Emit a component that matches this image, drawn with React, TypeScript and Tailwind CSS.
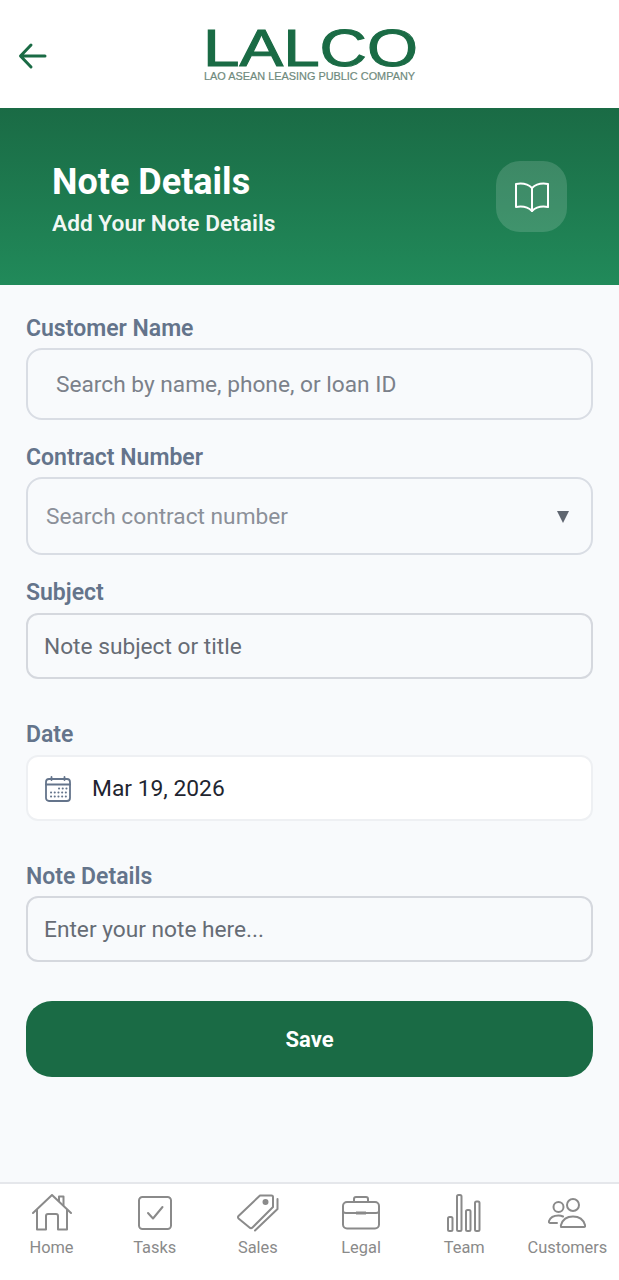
import { FC, ReactNode } from 'react';

const Label: FC<{ text: string; className?: string }> = ({ text, className = '' }) => (
    <div className={ `text-[23px] leading-[26px] font-semibold text-[#64748b] ${ className }` }>{ text }</div>
);

const navStroke = { fill: 'none', stroke: '#8a8a8a', strokeWidth: 2, strokeLinecap: 'round', strokeLinejoin: 'round' } as const;

const HomeIcon = () => (
    <svg width="40" height="38" viewBox="0 0 40 38" { ...navStroke }>
        <path d="M1 19 L20 1 L39 19" />
        <path d="M27 7 V2.5 H31.5 V11" />
        <path d="M5 16 V35.5 H14 V22 Q14 20 16 20 H24 Q26 20 26 22 V35.5 H35 V16" />
    </svg>
);
const TasksIcon = () => (
    <svg width="34" height="34" viewBox="0 0 34 34" { ...navStroke }>
        <rect x="1" y="1" width="32" height="32" rx="3.5" />
        <path d="M10 17 L15 22.5 L24.5 11" />
    </svg>
);
const SalesIcon = () => (
    <svg width="42" height="38" viewBox="0 0 42 38" { ...navStroke }>
        <path d="M1.5 22 L23 1.5 L34.5 1.5 Q36 1.5 36 3 L36 13 L15.5 33.5 Q14 35 12.5 33.5 L1.5 24.5 Q0.5 23 1.5 22 Z" />
        <circle cx="28.5" cy="8" r="2" fill="#8a8a8a" />
        <path d="M40.5 5 V15 L18 36.5" />
    </svg>
);
const LegalIcon = () => (
    <svg width="38" height="34" viewBox="0 0 38 34" { ...navStroke }>
        <rect x="1" y="6" width="36" height="26.5" rx="4" />
        <path d="M12 6 V3 Q12 1 14 1 H24 Q26 1 26 3 V6" />
        <path d="M1 15 Q1 17 4 17 H34 Q37 17 37 15" />
        <rect x="14" y="15.5" width="10" height="3" fill="#8a8a8a" stroke="none" />
    </svg>
);
const TeamIcon = () => (
    <svg width="34" height="38" viewBox="0 0 34 38" { ...navStroke }>
        <rect x="1" y="23" width="4.5" height="14" rx="1.5" />
        <rect x="10" y="1" width="4.5" height="36" rx="1.5" />
        <rect x="19" y="16" width="4.5" height="21" rx="1.5" />
        <rect x="28" y="7.5" width="4.5" height="29.5" rx="1.5" />
    </svg>
);
const CustomersIcon = () => (
    <svg width="38" height="30" viewBox="0 0 38 30" { ...navStroke }>
        <circle cx="10.5" cy="9" r="5" />
        <circle cx="25" cy="7" r="6" />
        <path d="M13 29 H36 Q37.5 29 37 27 Q34.5 18.5 25 18.5 Q15.5 18.5 13 27 Q12.5 29 14 29" />
        <path d="M9 25 H2.5 Q0.5 25 1 23 Q3 17.5 10.5 17.5 Q13 17.5 15 18.5" />
    </svg>
);

const CalendarIcon = () => (
    <svg width="26" height="26" viewBox="0 0 26 26" fill="none" stroke="#64748b" strokeWidth="1.8" strokeLinecap="round">
        <rect x="1" y="3" width="24" height="22" rx="3" />
        <path d="M1 8.5 H25" />
        <path d="M6.5 1 V4 M19.5 1 V4" />
        <path strokeWidth="2" strokeDasharray="0.1 3.6" d="M14 12.5 H22 M6 16.5 H22 M6 20.5 H22" />
    </svg>
);

const NavItem: FC<{ label: string; children: ReactNode }> = ({ label, children }) => (
    <div className="flex flex-col items-center w-[103px]">
        <div className="h-[42px] flex items-center justify-center">{ children }</div>
        <span className="mt-[4px] text-[16.4px] leading-[20px] text-[#8a8a8a] whitespace-nowrap">{ label }</span>
    </div>
);

export default function App()
{
    return (
        <div className="w-[619px] h-[1280px] flex flex-col bg-[#f8fafc] font-['Roboto',sans-serif]">
            <header className="h-[108px] bg-white flex items-center relative shrink-0">
                <svg className="absolute left-[18px] top-[42px]" width="29" height="28" viewBox="0 0 29 28" fill="none" stroke="#1a6b45" strokeWidth="3" strokeLinecap="round" strokeLinejoin="round">
                    <path d="M3 14 H27 M13 3 L2.5 14 L13 25" />
                </svg>
                <div className="ml-[203px] mt-[4px] w-[212px] flex flex-col font-['Liberation_Sans',sans-serif]">
                    <span className="block h-[36px] text-[51px] leading-[36px] text-[#1a6b45] origin-left scale-x-[1.285] whitespace-nowrap [-webkit-text-stroke:1px_#1a6b45]">LALCO</span>
                    <span className="block mt-[4px] ml-[1px] text-[10.9px] leading-[11px] text-[#6f8a7d] whitespace-nowrap [-webkit-text-stroke:0.2px_#6f8a7d]">LAO ASEAN LEASING PUBLIC COMPANY</span>
                </div>
            </header>

            <section className="h-[177px] shrink-0 bg-gradient-to-b from-[#1a6b45] to-[#218a5a] pl-[52px] pr-[52px] flex items-center justify-between">
                <div className="mt-[6px]">
                    <div className="text-[36px] leading-[40px] font-bold text-white">Note Details</div>
                    <div className="mt-[8px] text-[22.7px] leading-[28px] font-semibold text-white/95">Add Your Note Details</div>
                </div>
                <div className="w-[71px] h-[71px] rounded-[24px] bg-white/15 flex items-center justify-center">
                    <svg width="36" height="32" viewBox="0 0 36 32" fill="none" stroke="white" strokeWidth="2" strokeLinejoin="round" strokeLinecap="round">
                        <path d="M18 7 C14 3 8 2 2 3 V26 C8 25 14 26 18 30 C22 26 28 25 34 26 V3 C28 2 22 3 18 7 Z" />
                        <path d="M18 7 V30" />
                    </svg>
                </div>
            </section>

            <main className="flex-1 px-[26px] pt-[31px]">
                <Label text="Customer Name" />
                <div className="mt-[6px] h-[72px] pt-[2px] rounded-[16px] border-2 border-[#d9dde4] flex items-center pl-[28px] text-[22.7px] text-[#7b818a]">
                    Search by name, phone, or loan ID
                </div>

                <Label text="Contract Number" className="mt-[25px]" />
                <div className="mt-[6px] h-[78px] pt-[2px] rounded-[16px] border-2 border-[#d9dde4] flex items-center justify-between pl-[18px] pr-[22px] text-[22.7px] text-[#8b9099]">
                    <span>Search contract number</span>
                    <span className="w-0 h-0 border-x-[6px] border-x-transparent border-t-[12px] border-t-[#5f6670]" />
                </div>

                <Label text="Subject" className="mt-[25px]" />
                <div className="mt-[7px] h-[66px] pt-[2px] rounded-[12px] border-2 border-[#d5d8de] flex items-center pl-[16px] text-[22.7px] text-[#666c75]">
                    Note subject or title
                </div>

                <Label text="Date" className="mt-[43px]" />
                <div className="mt-[7px] h-[66px] pt-[2px] rounded-[12px] border-2 border-[#eef0f3] bg-white flex items-center pl-[17px] gap-[21px] text-[22.8px] text-[#1f2530]">
                    <CalendarIcon />
                    <span>Mar 19, 2026</span>
                </div>

                <Label text="Note Details" className="mt-[43px]" />
                <div className="mt-[6px] h-[66px] pt-[2px] rounded-[12px] border-2 border-[#d5d8de] flex items-center pl-[16px] text-[22.7px] text-[#666c75]">
                    Enter your note here...
                </div>

                <button className="mt-[39px] w-full h-[76px] rounded-[26px] bg-[#1a6b45] text-white text-[22px] font-bold">Save</button>
            </main>

            <nav className="h-[98px] shrink-0 bg-white border-t-2 border-[#e5e7eb] flex justify-between pt-[8px]">
                <NavItem label="Home"><HomeIcon /></NavItem>
                <NavItem label="Tasks"><TasksIcon /></NavItem>
                <NavItem label="Sales"><SalesIcon /></NavItem>
                <NavItem label="Legal"><LegalIcon /></NavItem>
                <NavItem label="Team"><TeamIcon /></NavItem>
                <NavItem label="Customers"><CustomersIcon /></NavItem>
            </nav>
        </div>
    );
}
